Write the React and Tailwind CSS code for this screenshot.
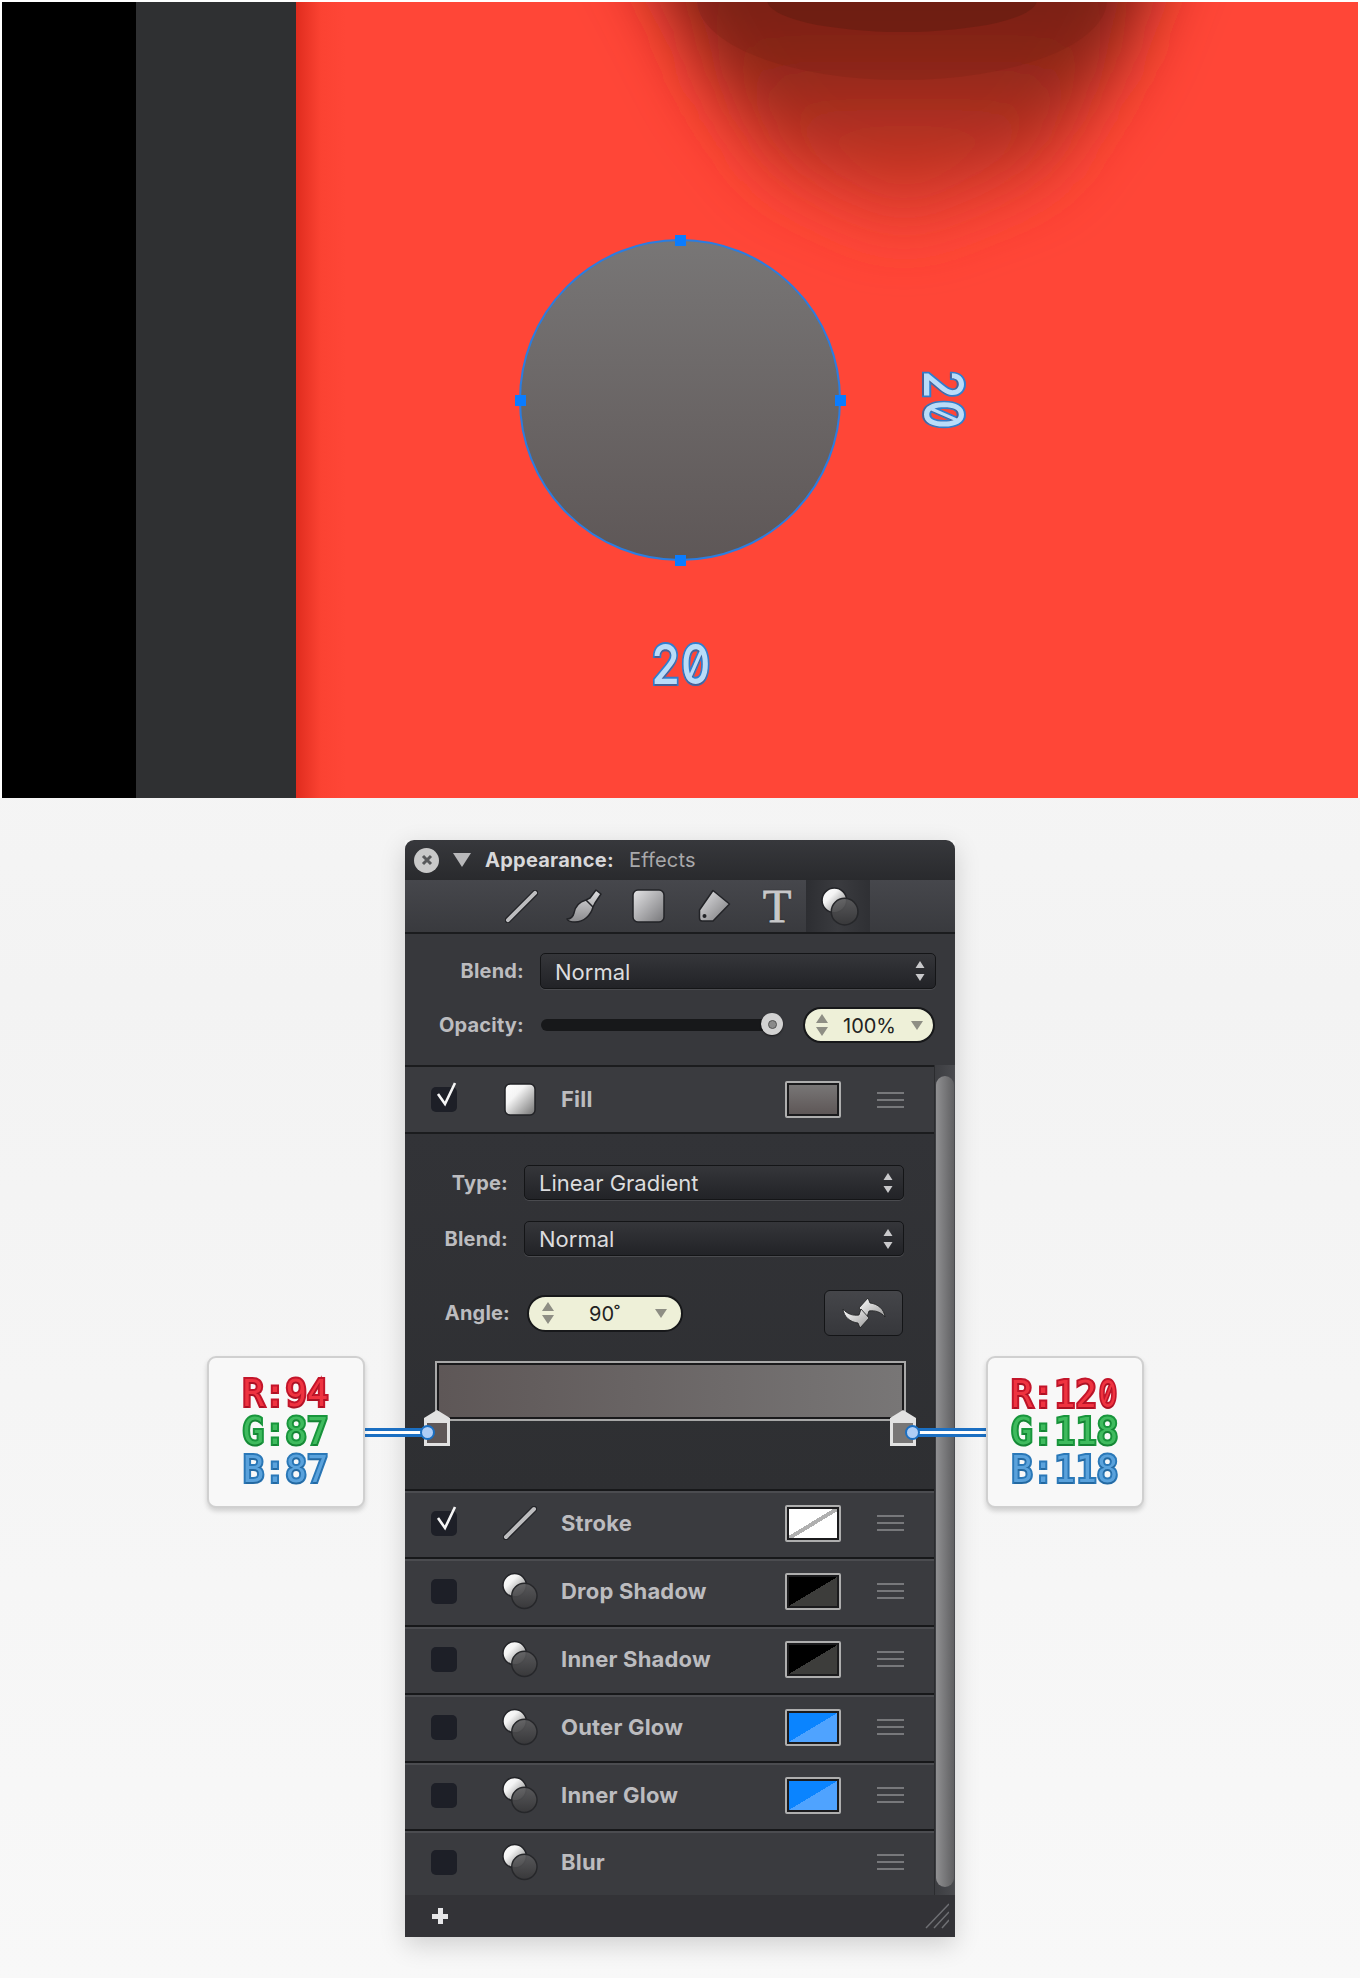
import React from "react";

const Grad = () => (
  <svg width="0" height="0" className="absolute">
    <defs>
      <linearGradient id="gIcon" x1="0" y1="0" x2="1" y2="1">
        <stop offset="0" stopColor="#e4e4e6" />
        <stop offset="1" stopColor="#77777a" />
      </linearGradient>
      <linearGradient id="gWhite" x1="0" y1="0" x2="1" y2="1">
        <stop offset="0" stopColor="#ffffff" />
        <stop offset="0.35" stopColor="#f4f4f4" />
        <stop offset="1" stopColor="#707070" />
      </linearGradient>
      <linearGradient id="gT" x1="0" y1="0" x2="0" y2="1">
        <stop offset="0" stopColor="#dedee0" />
        <stop offset="1" stopColor="#8a8a8d" />
      </linearGradient>
      <linearGradient id="gDark" x1="0" y1="0" x2="0" y2="1">
        <stop offset="0" stopColor="#5c5c5e" />
        <stop offset="1" stopColor="#38383a" />
      </linearGradient>
      <linearGradient id="gSwap" x1="0" y1="0" x2="1" y2="1">
        <stop offset="0" stopColor="#ffffff" />
        <stop offset="1" stopColor="#9a9a9a" />
      </linearGradient>
    </defs>
  </svg>
);

const Circles = ({ className = "" }) => (
  <svg viewBox="0 0 37 38" className={className}>
    <circle cx="13" cy="13" r="12" fill="url(#gWhite)" stroke="#222327" strokeWidth="1.5" />
    <circle cx="23" cy="24" r="13" fill="url(#gDark)" fillOpacity="0.9" stroke="#26272a" strokeWidth="1.5" />
  </svg>
);

const LineIcon = ({ className = "" }) => (
  <svg viewBox="0 0 34 34" className={className}>
    <path d="M3 31 31 3" stroke="#222327" strokeWidth="6.5" strokeLinecap="round" />
    <path d="M3 31 31 3" stroke="#bdbdbf" strokeWidth="4" strokeLinecap="round" />
  </svg>
);

const Brush = ({ className = "" }) => (
  <svg viewBox="0 0 36 34" className={className}>
    <path
      d="M30 1 L35 5 L29 14 L27 18 C25 26 18 33 9 33 C5 33 2 32 1 30 C5 30 7 28 8 24 C9 18 13 13 20 11 L24 9 Z"
      fill="url(#gT)"
      stroke="#222327"
      strokeWidth="1.5"
      strokeLinejoin="round"
    />
    <path d="M20 11 L27 18" stroke="#222327" strokeWidth="1.5" />
  </svg>
);

const SquareIcon = () => (
  <svg viewBox="0 0 33 34" className="w-[33px] h-[34px]">
    <rect x="1" y="1" width="31" height="32" rx="5" fill="url(#gIcon)" stroke="#222327" strokeWidth="1.5" />
  </svg>
);

const Tag = () => (
  <svg viewBox="0 0 33 34" className="w-[33px] h-[34px]">
    <path
      d="M15 1.5 L31.5 15 L15 32 L4 32 C2 32 1.5 31 1.5 29 L1.5 21 Z"
      fill="url(#gIcon)"
      stroke="#222327"
      strokeWidth="1.5"
      strokeLinejoin="round"
    />
    <circle cx="6.5" cy="27" r="2" fill="#222327" />
  </svg>
);

const Swap = () => (
  <svg viewBox="0 0 44 32" className="w-[44px] h-[32px]">
    <path
      d="M26 1 L17 11 L25 20 L27 14 C33 13 39 15 43 20 C42 12 36 7 28 6 Z"
      fill="url(#gSwap)"
      stroke="#1d1e20"
      strokeWidth="0.8"
      strokeLinejoin="round"
    />
    <path
      d="M18 31 L27 21 L19 12 L17 18 C11 19 5 17 1 12 C2 20 8 25 16 26 Z"
      fill="url(#gSwap)"
      stroke="#1d1e20"
      strokeWidth="0.8"
      strokeLinejoin="round"
    />
  </svg>
);

const UpDown = () => (
  <svg viewBox="0 0 10 20" className="w-[10px] h-[20px]">
    <path d="M5 0 L9.5 7 H0.5 Z M5 20 L9.5 13 H0.5 Z" fill="#c9c9cb" />
  </svg>
);

const PillStep = () => (
  <svg viewBox="0 0 12 22" className="w-[12px] h-[22px]">
    <path d="M6 0 L12 9 H0 Z M6 22 L12 13 H0 Z" fill="#8e8e84" />
  </svg>
);

const PillDrop = () => (
  <svg viewBox="0 0 12 9" className="w-[12px] h-[9px]">
    <path d="M0 0 H12 L6 9 Z" fill="#8e8e84" />
  </svg>
);

const Check = () => (
  <svg viewBox="0 0 26 34" className="absolute left-0 bottom-0 w-[26px] h-[34px]">
    <path d="M7 16 L14 26 L24 5" fill="none" stroke="#f6f6f6" strokeWidth="2.6" />
  </svg>
);

const label = "text-[20px] font-bold tracking-[0.2px] text-[#bcbcbf] text-right";

const Select = ({ text, className = "" }) => (
  <div
    className={`flex items-center justify-between pl-[14px] pr-[10px] rounded-[5px] border-[1.5px] border-[#141517] bg-gradient-to-b from-[#35363a] to-[#222327] shadow-[0_1px_0_#4a4b4f] ${className}`}
  >
    <span className="text-[22px] leading-[26px] pt-[1px] text-[#dcdcde] whitespace-nowrap">{text}</span>
    <UpDown />
  </div>
);

const Hamburger = () => (
  <div className="w-[27px] flex flex-col gap-[5px] ml-[36px] shrink-0">
    <div className="h-[2px] bg-[#77787b]" />
    <div className="h-[2px] bg-[#77787b]" />
    <div className="h-[2px] bg-[#77787b]" />
  </div>
);

const Swatch = ({ kind }) => {
  const fill = {
    gradient: "bg-gradient-to-b from-[#787676] to-[#5e5757]",
    stroke: "bg-[linear-gradient(to_bottom_right,#ffffff_46%,#b0b0b0_46%,#b0b0b0_54%,#ffffff_54%)]",
    shadow: "bg-[linear-gradient(to_bottom_right,#000000_50%,#3d3d3b_50%)]",
    glow: "bg-[linear-gradient(to_bottom_right,#0a84ff_50%,#4fa3ff_50%)]",
  }[kind];
  if (!kind) return <div className="w-[56px] shrink-0" />;
  return (
    <div className="w-[56px] h-[37px] shrink-0 border-2 border-[#aeaeae] rounded-[2px] bg-[#1b1b1d] p-[2px]">
      <div className={`w-full h-full ${fill}`} />
    </div>
  );
};

const Row = ({ checked, icon, name, swatch, h = "h-[68px]", top = true }) => (
  <div
    className={`${h} flex items-center pl-[26px] bg-[#3a3b3f] ${
      top ? "border-t-[2px] border-[#17181a] shadow-[inset_0_2px_0_#4b4c50] pb-[2px]" : ""
    }`}
  >
    <div className="relative w-[26px] h-[25px] rounded-[5px] bg-[#1d1f27] shrink-0">{checked && <Check />}</div>
    <div className="w-[36px] ml-[46px] -translate-x-[1px] shrink-0 flex justify-center">{icon}</div>
    <div className="ml-[22px] flex-1 text-[22px] leading-[26px] font-bold tracking-[0.2px] text-[#bcbcbf] whitespace-nowrap -mt-[1px]">
      {name}
    </div>
    <Swatch kind={swatch} />
    <Hamburger />
    <div className="w-[30px] shrink-0" />
  </div>
);

const Stop = ({ className, color }) => (
  <div className={`absolute top-[47px] w-[26px] h-[36px] ${className}`}>
    <div className="w-0 h-0 border-l-[13px] border-r-[13px] border-b-[8px] border-l-transparent border-r-transparent border-b-[#e2e2e2]" />
    <div className="h-[28px] bg-[#e2e2e2] px-[3px] pb-[3px] pt-[5px]">
      <div className={`w-full h-full ${color}`} />
    </div>
  </div>
);

const Callout = ({ className, lines }) => (
  <div
    className={`absolute top-[516px] w-[158px] h-[152px] rounded-[9px] bg-[#f8f8f8] border-2 border-[#d0d0d0] shadow-[0_3px_5px_rgba(0,0,0,0.16)] flex flex-col items-center justify-center ${className}`}
  >
    {lines.map(([t, cls]) => (
      <div
        key={t}
        className={`h-[38px] leading-[38px] text-[37px] font-normal scale-x-[0.96] whitespace-nowrap [font-family:'DejaVu_Sans_Mono',monospace] [paint-order:stroke_fill] [-webkit-text-stroke:4px_var(--s)] [text-shadow:0_2px_0_rgba(0,0,0,0.12)] ${cls}`}
      >
        {t.endsWith("0") ? (
          <>
            {t.slice(0, -1)}
            <span className="[font-family:Inter,sans-serif] [font-feature-settings:'zero','tnum'] inline-block w-[22px] text-center scale-x-[0.8]">
              0
            </span>
          </>
        ) : (
          t
        )}
      </div>
    ))}
  </div>
);

const Connector = ({ className, dot }) => (
  <div className={`absolute top-[588px] h-[9px] bg-white border-y-[3px] border-[#1b6fc2] ${className}`}>
    <div className={`absolute top-[-6.5px] w-[15px] h-[15px] rounded-full bg-[#aecdf6] border-2 border-[#1b6fc2] ${dot}`} />
  </div>
);

const dim =
  "absolute text-[55px] leading-none font-medium text-[#b9dcf9] scale-x-[0.84] [font-family:Inter,sans-serif] [font-feature-settings:'zero','tnum'] [paint-order:stroke_fill] [-webkit-text-stroke:4px_#2f7ed0] [text-shadow:0_2px_1px_rgba(120,40,40,0.35)]";

const Handle = ({ className }) => <div className={`absolute w-[11px] h-[11px] bg-[#0a7cff] ${className}`} />;

export default function App() {
  return (
    <div className="w-[1360px] h-[1978px] overflow-hidden bg-gradient-to-b from-[#fbfbfb] via-[#f3f3f3] to-[#f8f8f8] [font-family:Inter,'Noto_Sans',sans-serif]">
      <Grad />
      {/* canvas */}
      <div className="bg-white pt-[2px] px-[2px]">
        <div className="flex h-[796px]">
          <div className="w-[134px] bg-black" />
          <div className="w-[160px] bg-[#2f3032]" />
          <div className="relative flex-1 overflow-hidden bg-[#ff4637]">
            <div className="absolute left-0 top-0 bottom-0 w-[50px] bg-gradient-to-r from-[#e02c1e] via-[#f9402f]/60 to-transparent" />
            <svg className="absolute left-0 top-0" width="1062" height="320" viewBox="0 0 1062 320">
              <defs>
                <filter id="blob" x="-30%" y="-30%" width="160%" height="160%">
                  <feGaussianBlur stdDeviation="34" />
                </filter>
                <linearGradient id="blobFill" x1="0" y1="0" x2="0" y2="1">
                  <stop offset="0" stopColor="#64190f" />
                  <stop offset="0.45" stopColor="#8c2618" />
                  <stop offset="1" stopColor="#e03d2e" />
                </linearGradient>
              </defs>
              <path
                d="M330 -80 H880 L825 60 L745 170 L606 220 L485 170 L420 90 Z"
                fill="url(#blobFill)"
                filter="url(#blob)"
              />
              <ellipse cx="606" cy="-2" rx="205" ry="80" fill="#7a2015" fillOpacity="0.3" />
              <ellipse cx="606" cy="-2" rx="135" ry="32" fill="#5f1b10" fillOpacity="0.5" />
            </svg>
            <div className="absolute left-[223px] top-[237px] w-[322px] h-[322px] rounded-full border-2 border-[#2b7de0] bg-gradient-to-b from-[#787676] to-[#5e5757]">
              <Handle className="left-[153.5px] top-[-6.5px]" />
              <Handle className="left-[153.5px] bottom-[-6.5px]" />
              <Handle className="left-[-6.5px] top-[153.5px]" />
              <Handle className="right-[-6.5px] top-[153.5px]" />
            </div>
            <div className={`${dim} left-[612px] top-[370px] rotate-90`}>20</div>
            <div className={`${dim} left-[349px] top-[635px]`}>20</div>
          </div>
          <div className="w-0" />
        </div>
      </div>

      {/* panel */}
      <div className="relative w-[550px] mx-auto mt-[42px] shadow-[0_8px_24px_rgba(0,0,0,0.16)]">
        {/* title */}
        <div className="h-[40px] flex items-center rounded-t-[9px] bg-gradient-to-b from-[#37383c] to-[#292a2d] pl-[9px]">
          <div className="w-[25px] h-[25px] rounded-full bg-[#c9c9c9] flex items-center justify-center">
            <svg viewBox="0 0 12 12" className="w-[12px] h-[12px]">
              <path d="M2 2 10 10M10 2 2 10" stroke="#57585a" strokeWidth="3" />
            </svg>
          </div>
          <div className="ml-[14px] w-0 h-0 border-l-[9px] border-r-[9px] border-t-[14px] border-l-transparent border-r-transparent border-t-[#b8b8ba]" />
          <div className="ml-[14px] text-[20px] leading-[24px] font-bold tracking-[0.25px] text-[#d8d8da] whitespace-nowrap -mt-[1px]">
            Appearance:
          </div>
          <div className="ml-[15px] text-[20px] leading-[24px] tracking-[0.2px] text-[#a9a9ab] -mt-[1px]">Effects</div>
        </div>
        {/* toolbar */}
        <div className="relative h-[54px] border-b-2 border-[#1b1c1e] bg-gradient-to-b from-[#46474c] to-[#393a3e] flex items-center pl-[100px]">
          <LineIcon className="w-[33px] h-[33px]" />
          <Brush className="ml-[28px] w-[36px] h-[34px]" />
          <div className="ml-[30px]">
            <SquareIcon />
          </div>
          <div className="ml-[33px]">
            <Tag />
          </div>
          <div className="ml-[30px] w-[32px] text-[47px] leading-[46px] text-center text-[#c8c8ca] [font-family:'Liberation_Serif',serif] [-webkit-text-stroke:0.8px_#c8c8ca] [text-shadow:0_0_2px_#111]">
            T
          </div>
          <div className="ml-[13px] w-[64px] h-[52px] self-start bg-gradient-to-r from-[#2d2e32] via-[#3a3b3f] to-[#2f3034] flex items-center justify-center">
            <Circles className="translate-x-[2px] w-[38px] h-[39px]" />
          </div>
        </div>
        {/* blend/opacity */}
        <div className="h-[131px] bg-[#37383c] pt-[19px]">
          <div className="flex items-center">
            <div className={`${label} w-[119px]`}>Blend:</div>
            <Select text="Normal" className="ml-[16px] w-[396px] h-[36px]" />
          </div>
          <div className="flex items-center mt-[18px] h-[36px]">
            <div className={`${label} w-[119px]`}>Opacity:</div>
            <div className="relative ml-[17px] w-[242px] h-[12px] rounded-full bg-[#17181a]">
              <div className="absolute left-[220px] top-[-6px] w-[22px] h-[22px] rounded-full bg-[#d2d2d2] shadow-[0_1px_2px_rgba(0,0,0,0.6)] flex items-center justify-center">
                <div className="w-[9px] h-[9px] rounded-full bg-[#8a8a8a] border border-[#555]" />
              </div>
            </div>
            <div className="ml-[20px] w-[132px] h-[36px] rounded-full bg-[#eef0d8] border-2 border-[#17181a] flex items-center pl-[11px] pr-[10px]">
              <PillStep />
              <span className="ml-[15px] pt-[2px] text-[20px] leading-[24px] text-[#222]">100%</span>
              <span className="flex-1" />
              <PillDrop />
            </div>
          </div>
        </div>
        {/* body */}
        <div className="flex h-[830px]">
          <div className="w-[529px] shrink-0">
            <div className="border-t-2 border-[#1b1c1e]">
              <Row
                checked
                h="h-[65px]"
                top={false}
                name="Fill"
                swatch="gradient"
                icon={
                  <svg viewBox="0 0 32 33" className="w-[32px] h-[33px]">
                    <rect x="1" y="1" width="30" height="31" rx="5" fill="url(#gWhite)" stroke="#222327" strokeWidth="1.5" />
                  </svg>
                }
              />
            </div>
            {/* gradient settings */}
            <div className="relative h-[357px] border-t-2 border-[#1b1c1e] bg-gradient-to-b from-[#323337] to-[#2e2f32] pt-[31px]">
              <div className="flex items-center">
                <div className={`${label} w-[103px]`}>Type:</div>
                <Select text="Linear Gradient" className="ml-[16px] w-[380px] h-[35px]" />
              </div>
              <div className="flex items-center mt-[21px]">
                <div className={`${label} w-[103px]`}>Blend:</div>
                <Select text="Normal" className="ml-[16px] w-[380px] h-[35px]" />
              </div>
              <div className="flex items-center mt-[34px] h-[46px]">
                <div className={`${label} w-[105px]`}>Angle:</div>
                <div className="ml-[17px] w-[156px] h-[37px] rounded-full bg-[#eef0d8] border-2 border-[#17181a] flex items-center pl-[13px] pr-[14px]">
                  <PillStep />
                  <span className="flex-1 text-center text-[20px] leading-[24px] pt-[2px] text-[#222]">90˚</span>
                  <PillDrop />
                </div>
                <div className="ml-[141px] w-[79px] h-[46px] rounded-[6px] border-[1.5px] border-[#141517] bg-gradient-to-b from-[#45464a] to-[#36373b] flex items-center justify-center">
                  <Swap />
                </div>
              </div>
              <div className="ml-[30px] mt-[25px] w-[471px] h-[60px] border-2 border-[#a8a8a8] bg-[#1a1a1c] p-[2px] relative">
                <div className="w-full h-full bg-gradient-to-r from-[#5e5757] to-[#787676]" />
                <Stop className="left-[-13px]" color="bg-[#5e5757]" />
                <Stop className="right-[-12px]" color="bg-[#787676]" />
              </div>
            </div>
            <Row checked name="Stroke" swatch="stroke" icon={<LineIcon className="w-[34px] h-[34px]" />} />
            <Row name="Drop Shadow" swatch="shadow" icon={<Circles className="w-[37px] h-[38px]" />} />
            <Row name="Inner Shadow" swatch="shadow" icon={<Circles className="w-[37px] h-[38px]" />} />
            <Row name="Outer Glow" swatch="glow" icon={<Circles className="w-[37px] h-[38px]" />} />
            <Row name="Inner Glow" swatch="glow" icon={<Circles className="w-[37px] h-[38px]" />} />
            <Row name="Blur" h="h-[66px]" icon={<Circles className="w-[37px] h-[38px]" />} />
          </div>
          {/* scrollbar */}
          <div className="flex-1 border-l border-[#2b2c2f] bg-gradient-to-r from-[#3c3d41] to-[#4a4b4f] pt-[11px] pb-[8px] flex justify-center">
            <div className="w-[18px] rounded-full bg-gradient-to-r from-[#909092] to-[#606062]" />
          </div>
        </div>
        {/* footer */}
        <div className="h-[42px] bg-[#333337] flex items-center justify-between pl-[27px] pr-[6px]">
          <div className="relative w-[16px] h-[16px]">
            <div className="absolute left-[5.5px] top-0 w-[5px] h-[16px] bg-[#e6e6e8]" />
            <div className="absolute left-0 top-[5.5px] w-[16px] h-[5px] bg-[#e6e6e8]" />
          </div>
          <svg viewBox="0 0 24 26" className="w-[24px] h-[26px]">
            <path d="M1 25 24 1M9 25 24 9M17 25 24 17" stroke="#6e6f73" strokeWidth="1.5" />
          </svg>
        </div>

        {/* overlays */}
        <Connector className="left-[-40px] w-[62px]" dot="right-[-8px]" />
        <Connector className="left-[508px] w-[73px]" dot="left-[-8px]" />
        <Callout
          className="left-[-198px]"
          lines={[
            ["R:94", "text-[#ef3340] [--s:#c3152a]"],
            ["G:87", "text-[#3fbb5e] [--s:#18963c]"],
            ["B:87", "text-[#5aa2dc] [--s:#2a78b8]"],
          ]}
        />
        <Callout
          className="left-[581px]"
          lines={[
            ["R:120", "text-[#ef3340] [--s:#c3152a]"],
            ["G:118", "text-[#3fbb5e] [--s:#18963c]"],
            ["B:118", "text-[#5aa2dc] [--s:#2a78b8]"],
          ]}
        />
      </div>
    </div>
  );
}
